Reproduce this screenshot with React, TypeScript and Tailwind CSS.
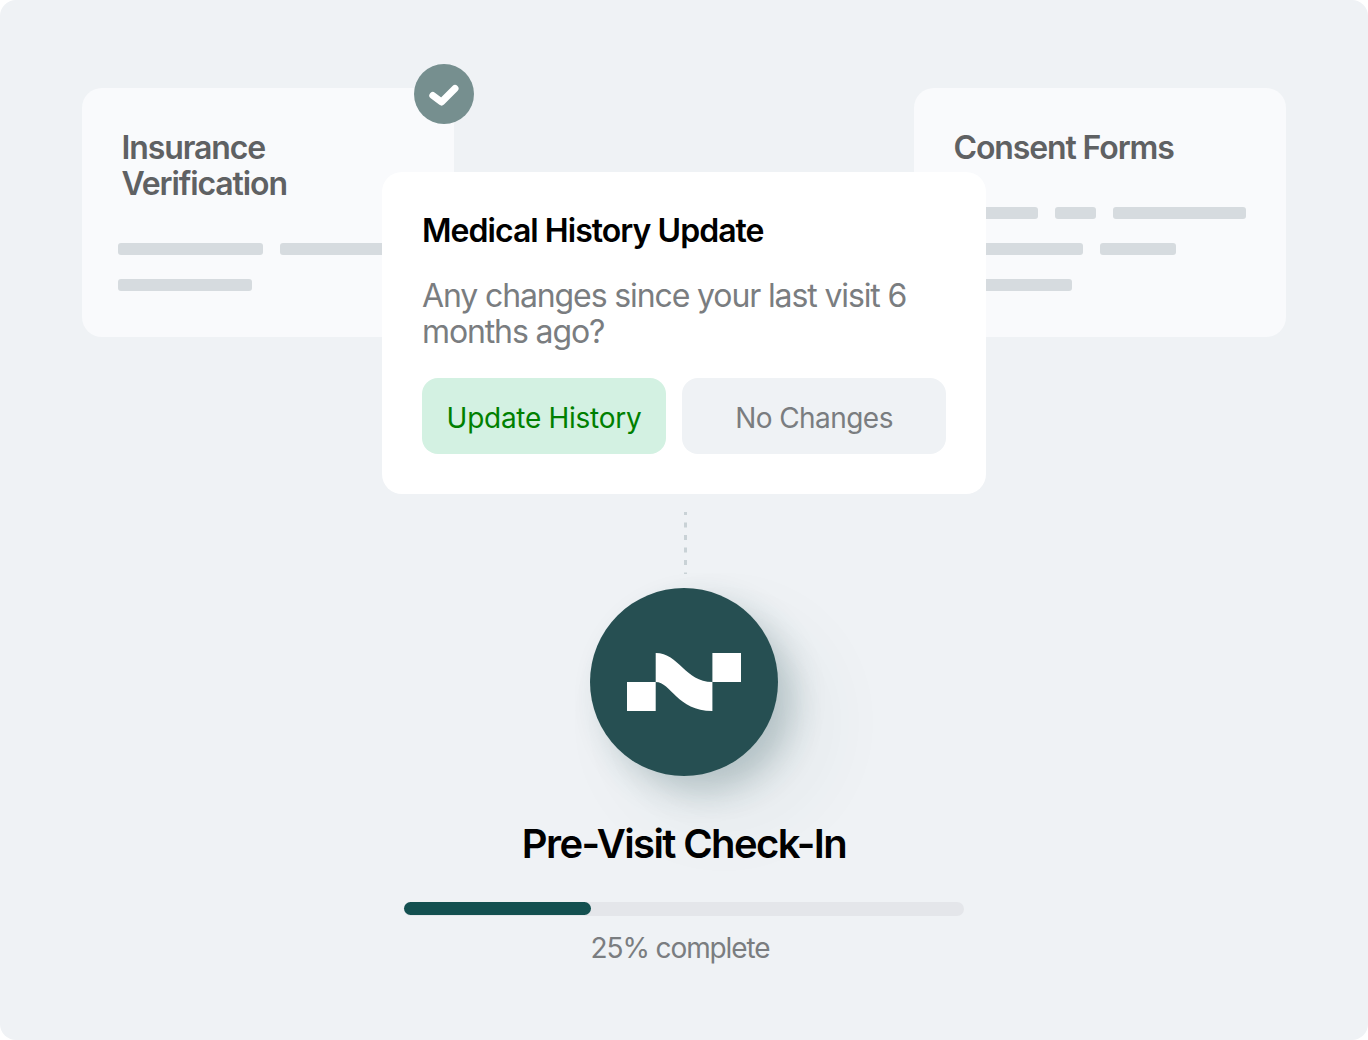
const FONT = "font-['Inter',sans-serif]";

function Bar({ width }: { width: number }) {
  return <div className="h-3 rounded-[3px] bg-[#d6dbdf]" style={{ width }} />;
}

function InfoCard({ title, rows }: { title: string; rows: number[][] }) {
  return (
    <div className="flex h-[249px] w-[372px] flex-col justify-end rounded-[20px] bg-[#f9fafc] px-9 pb-[46px]">
      <h3 className="mb-[41px] w-[260px] pl-[3.5px] text-[32px] leading-9 font-semibold tracking-[-0.035em] text-[#5f6163]">
        {title}
      </h3>
      <div className="flex flex-col gap-6">
        {rows.map((row, i) => (
          <div key={i} className="flex gap-[17px]">
            {row.map((w, j) => (
              <Bar key={j} width={w} />
            ))}
          </div>
        ))}
      </div>
    </div>
  );
}

function CheckBadge() {
  return (
    <div className="absolute top-[-24px] left-[332px] flex h-[60px] w-[60px] items-center justify-center rounded-full bg-[#768f8f]">
      <svg width="32" height="26" viewBox="0 0 32 26" fill="none" className="mt-[2px]">
        <path d="M4.8 13.5 L13.5 20 L27 6.5" stroke="white" strokeWidth="7" strokeLinecap="round" strokeLinejoin="round" />
      </svg>
    </div>
  );
}

function Logo() {
  return (
    <svg width="114" height="58" viewBox="0 0 114 58" fill="white">
      <rect x="0" y="29" width="28.7" height="29" />
      <rect x="85.4" y="0" width="28.6" height="29" />
      <path d="M28.7 0 C52 0 58 29 85.4 29 V58 C50 58 44 29 28.7 29 Z" />
    </svg>
  );
}

export default function App() {
  return (
    <div className={`${FONT} h-[1040px] w-[1368px] overflow-hidden rounded-2xl bg-[#eff2f5] pt-[88px]`}>
      <div className="flex justify-between px-[82px]">
        <div className="relative">
          <InfoCard title="Insurance Verification" rows={[[145, 120], [134]]} />
          <CheckBadge />
        </div>
        <InfoCard title="Consent Forms" rows={[[88, 41, 133], [133, 76], [122]]} />
      </div>

      <div className="relative z-10 mx-auto mt-[-165px] h-[322px] w-[604px] rounded-[20px] bg-white px-10 pt-[41px]">
        <h2 className="text-[32px] leading-9 font-semibold tracking-[-0.03em] text-black">
          Medical History Update
        </h2>
        <p className="mt-[29px] text-[32px] leading-9 tracking-[-0.035em] text-[#7a7d80]">
          Any changes since your last visit 6 months ago?
        </p>
        <div className="mt-[28px] flex gap-4">
          <button className="h-[76px] w-[244px] rounded-2xl bg-[#d3f1e2] pt-1 text-[28px] tracking-[-0.01em] text-[#008000]">
            Update History
          </button>
          <button className="h-[76px] w-[264px] rounded-2xl bg-[#eff2f5] pt-1 text-[28px] tracking-[-0.02em] text-[#7a7d80]">
            No Changes
          </button>
        </div>
      </div>

      <svg className="mx-auto mt-[18px] block" width="6" height="62" viewBox="0 0 6 62">
        <line x1="4.5" y1="0" x2="4.5" y2="62" stroke="#c9d2d6" strokeWidth="3" strokeDasharray="5 7.5" strokeDashoffset="2" />
      </svg>

      <div className="mx-auto mt-[14px] flex h-[188px] w-[188px] items-center justify-center rounded-full bg-[#264f52] shadow-[16px_16px_32px_rgba(38,79,82,0.24),40px_40px_80px_rgba(38,79,82,0.07)]">
        <Logo />
      </div>

      <h1 className="mt-[43px] text-center text-[40px] leading-[50px] font-semibold tracking-[-0.04em] text-black">
        Pre-Visit Check-In
      </h1>

      <div className="mx-auto mt-[33px] h-[14px] w-[560px] rounded-full bg-[#e4e6ea]">
        <div className="h-[13px] w-[187px] rounded-full bg-[#135050]" />
      </div>

      <p className="mt-[14px] pr-2 text-center text-[28px] leading-9 tracking-[-0.04em] text-[#7a7d80]">25% complete</p>
    </div>
  );
}
